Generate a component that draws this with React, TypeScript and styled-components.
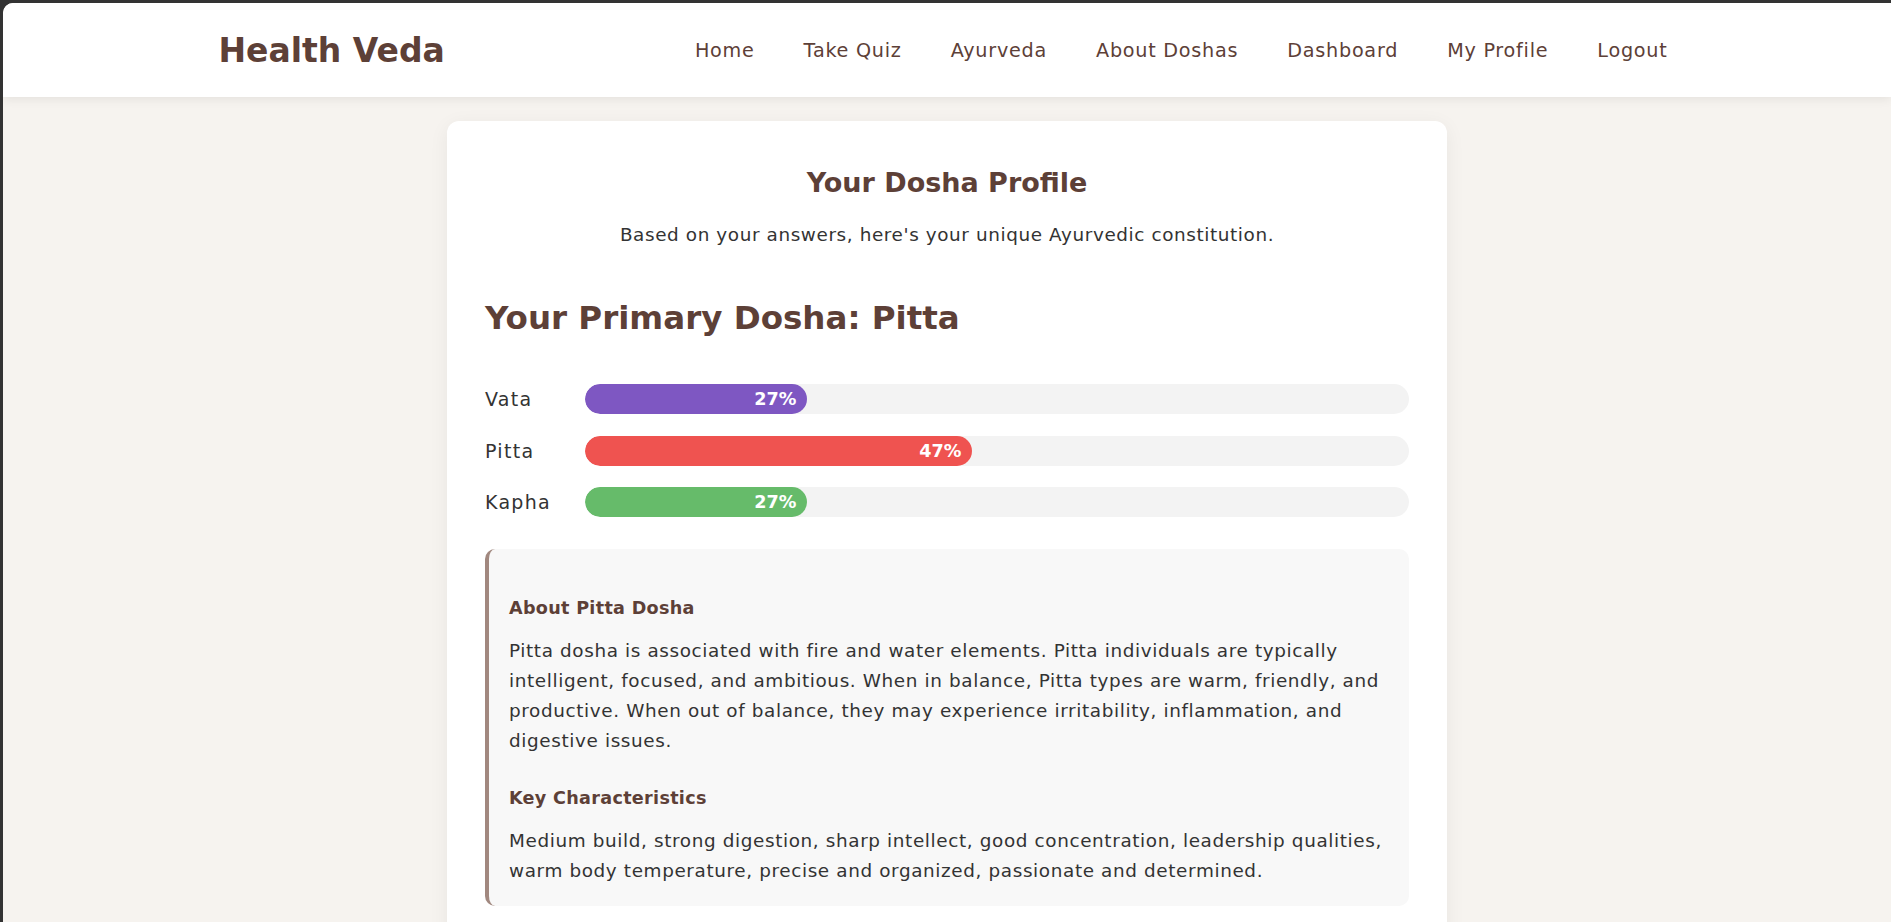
import React from "react";
import styled, { createGlobalStyle } from "styled-components";

const GlobalStyle = createGlobalStyle`
  html, body {
    margin: 0;
    padding: 0;
    background: #333333;
    overflow: hidden;
  }
  body {
    font-family: "DejaVu Sans", "Open Sans", Arial, sans-serif;
    color: #333333;
  }
  * { box-sizing: border-box; }
`;

const Frame = styled.div`
  height: 100vh;
  padding: 3px 0 0 3px;
`;

const Page = styled.div`
  height: 100%;
  background: #f6f3ef;
  border-top-left-radius: 10px;
  overflow: hidden;
`;

const Header = styled.header`
  position: relative;
  z-index: 1;
  height: 94px;
  display: flex;
  align-items: center;
  background: #ffffff;
  box-shadow: 0 2px 10px rgba(0, 0, 0, 0.08);
`;

const HeaderInner = styled.div`
  width: 100%;
  max-width: 1457px;
  margin: 0 auto;
  display: flex;
  align-items: center;
  justify-content: space-between;
`;

const Logo = styled.div`
  font-size: 33px;
  font-weight: 700;
  color: #5d4037;
`;

const Nav = styled.nav`
  display: flex;
  align-items: center;
  gap: 33px;
`;

const NavLink = styled.a`
  padding: 0 8px;
  font-size: 19.2px;
  letter-spacing: 0.75px;
  color: #5d4037;
  text-decoration: none;
`;

const Main = styled.main`
  padding-top: 24px;
`;

const Card = styled.section`
  width: 1000px;
  margin: 0 auto;
  padding: 38px 38px 40px;
  background: #ffffff;
  border-radius: 12px;
  box-shadow: 0 4px 20px rgba(0, 0, 0, 0.06);
`;

const Title = styled.h2`
  margin: 3px 0 0;
  text-align: center;
  font-size: 27px;
  line-height: 42px;
  font-weight: 700;
  color: #5d4037;
`;

const Subtitle = styled.p`
  margin: 16px 0 0;
  text-align: center;
  font-size: 18.4px;
  letter-spacing: 0.6px;
  line-height: 30px;
  color: #333333;
`;

const Primary = styled.h3`
  margin: 44px 0 0;
  font-size: 32.5px;
  line-height: 48px;
  font-weight: 700;
  color: #5d4037;
`;

const Bars = styled.div`
  margin-top: 42px;
  display: flex;
  flex-direction: column;
  gap: 21.5px;
`;

const BarRow = styled.div`
  display: flex;
  align-items: center;
`;

const BarLabel = styled.span`
  width: 100px;
  font-size: 19px;
  letter-spacing: 1.3px;
  color: #333333;
`;

const Track = styled.div`
  flex: 1;
  height: 30px;
  background: #f3f3f3;
  border-radius: 15px;
  overflow: hidden;
`;

const Fill = styled.div<{ $color: string }>`
  height: 100%;
  display: flex;
  align-items: center;
  justify-content: flex-end;
  padding-right: 11px;
  background: ${(p) => p.$color};
  border-radius: 15px;
  color: #ffffff;
  font-size: 17.6px;
  font-weight: 700;
`;

const InfoBox = styled.div`
  margin-top: 32px;
  padding: 17px 8px 20px 20px;
  background: #f8f8f8;
  border-left: 4px solid #a1887f;
  border-radius: 10px;
`;

const InfoTitle = styled.h4`
  margin: 28px 0 14px;
  font-size: 17.6px;
  letter-spacing: 0.3px;
  line-height: 28px;
  font-weight: 700;
  color: #5d4037;
`;

const InfoText = styled.p`
  margin: 0;
  font-size: 18.4px;
  letter-spacing: 0.62px;
  line-height: 30px;
  color: #333333;
`;

const doshas = [
  { name: "Vata", value: 27, color: "#7e57c2" },
  { name: "Pitta", value: 47, color: "#ef5350" },
  { name: "Kapha", value: 27, color: "#66bb6a" },
];

const links = ["Home", "Take Quiz", "Ayurveda", "About Doshas", "Dashboard", "My Profile", "Logout"];

export default function App() {
  return (
    <>
      <GlobalStyle />
      <Frame>
        <Page>
          <Header>
            <HeaderInner>
              <Logo>Health Veda</Logo>
              <Nav>
                {links.map((l) => (
                  <NavLink key={l} href="#">
                    {l}
                  </NavLink>
                ))}
              </Nav>
            </HeaderInner>
          </Header>
          <Main>
            <Card>
              <Title>Your Dosha Profile</Title>
              <Subtitle>Based on your answers, here's your unique Ayurvedic constitution.</Subtitle>
              <Primary>Your Primary Dosha: Pitta</Primary>
              <Bars>
                {doshas.map((d) => (
                  <BarRow key={d.name}>
                    <BarLabel>{d.name}</BarLabel>
                    <Track>
                      <Fill $color={d.color} style={{ width: `${d.value}%` }}>
                        {d.value}%
                      </Fill>
                    </Track>
                  </BarRow>
                ))}
              </Bars>
              <InfoBox>
                <InfoTitle>About Pitta Dosha</InfoTitle>
                <InfoText>
                  Pitta dosha is associated with fire and water elements. Pitta individuals are typically
                  intelligent, focused, and ambitious. When in balance, Pitta types are warm, friendly, and
                  productive. When out of balance, they may experience irritability, inflammation, and
                  digestive issues.
                </InfoText>
                <InfoTitle>Key Characteristics</InfoTitle>
                <InfoText>
                  Medium build, strong digestion, sharp intellect, good concentration, leadership qualities,
                  warm body temperature, precise and organized, passionate and determined.
                </InfoText>
              </InfoBox>
            </Card>
          </Main>
        </Page>
      </Frame>
    </>
  );
}
